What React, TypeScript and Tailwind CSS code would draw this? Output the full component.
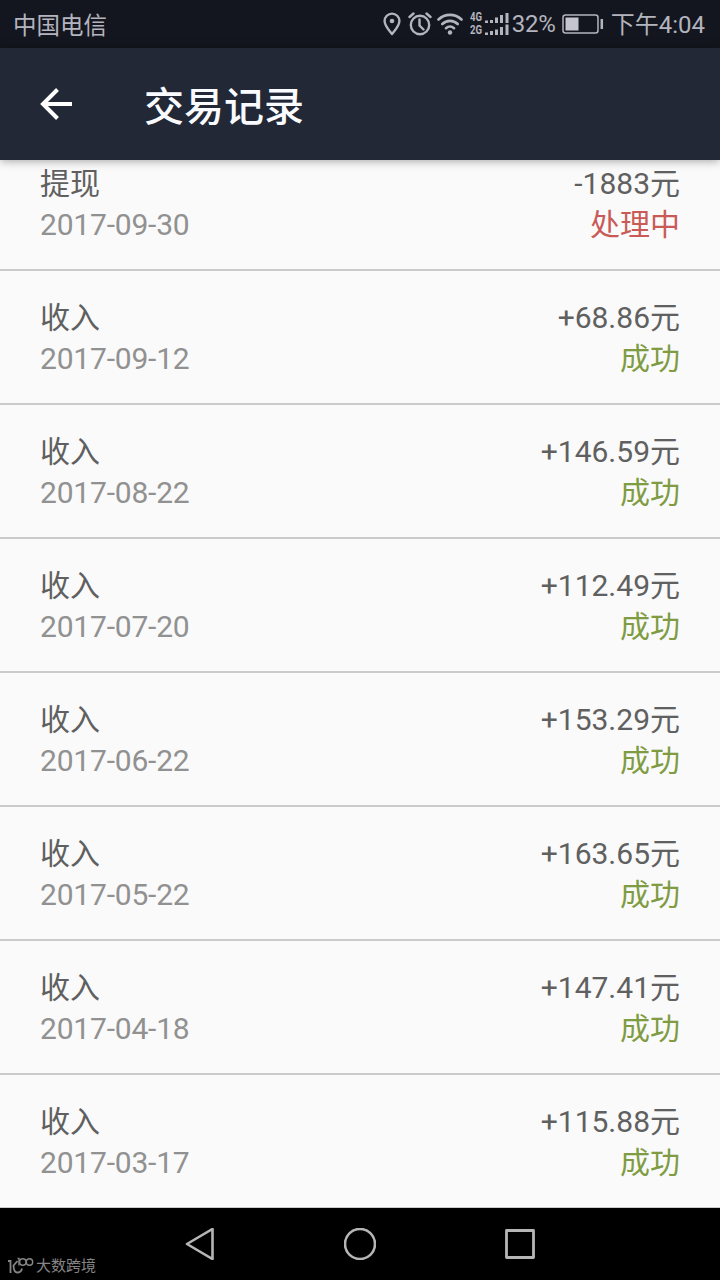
import React from 'react';

type Transaction = {
  title: string;
  date: string;
  amount: string;
  status: string;
  pending?: boolean;
};

const transactions: Transaction[] = [
  { title: '提现', date: '2017-09-30', amount: '-1883元', status: '处理中', pending: true },
  { title: '收入', date: '2017-09-12', amount: '+68.86元', status: '成功' },
  { title: '收入', date: '2017-08-22', amount: '+146.59元', status: '成功' },
  { title: '收入', date: '2017-07-20', amount: '+112.49元', status: '成功' },
  { title: '收入', date: '2017-06-22', amount: '+153.29元', status: '成功' },
  { title: '收入', date: '2017-05-22', amount: '+163.65元', status: '成功' },
  { title: '收入', date: '2017-04-18', amount: '+147.41元', status: '成功' },
  { title: '收入', date: '2017-03-17', amount: '+115.88元', status: '成功' }
];

const StatusBar = () => (
  <div className="h-12 shrink-0 bg-[#14161f] text-[#b3b4bd] flex items-center justify-between pl-[13px] pr-[15px] text-[24px] leading-[48px] whitespace-nowrap">
    <span className="pt-[4px] text-[23.5px] leading-[44px]">中国电信</span>
    <div className="flex items-center">
      {/* Location */}
      <svg className="w-[18px] h-[24px]" viewBox="0 0 18 24" fill="none" stroke="currentColor" strokeWidth="2.4">
        <path d="M9 22C6 18 1.6 14 1.6 9a7.4 7.4 0 0 1 14.8 0c0 5-4.4 9-7.4 13z" strokeLinejoin="round" />
        <circle cx="9" cy="9" r="2.3" fill="currentColor" stroke="none" />
      </svg>
      {/* Alarm */}
      <svg className="ml-[7px] w-[24px] h-[24px]" viewBox="0 0 24 24" fill="none" stroke="currentColor" strokeWidth="2.4">
        <circle cx="12" cy="13" r="9.2" />
        <path d="M11.5 7.5v6l4 4M1.5 5l4-3.5M22.5 5l-4-3.5" strokeLinecap="round" />
      </svg>
      {/* Wi-Fi */}
      <svg className="ml-[5px] w-[26px] h-[24px]" viewBox="0 0 26 24" fill="none" stroke="currentColor" strokeWidth="2.6" strokeLinecap="round">
        <path d="M1.5 7.5a16.5 16.5 0 0 1 23 0M5.3 12a11 11 0 0 1 15.4 0M9 16.2a6 6 0 0 1 8 0" />
        <circle cx="13" cy="20.5" r="2.2" fill="currentColor" stroke="none" />
      </svg>
      {/* Dual SIM signal */}
      <div className="ml-[7px] w-[14px] text-[12px] font-bold">
        <div className="h-[13px] leading-[13px] origin-left scale-x-[0.8]">4G</div>
        <div className="h-[13px] leading-[13px] origin-left scale-x-[0.8]">2G</div>
      </div>
      <svg className="w-[25px] h-[24px]" viewBox="0 0 25 24" fill="none" stroke="currentColor" strokeWidth="3">
        <path d="M2.5 11V8.500M7.500 11V8M12.500 11V5.500M17.500 11V3M23 11V1M2.500 23v-2.500M7.500 23v-4M12.500 23v-5.500M17.500 23v-8M23 23V12.500" />
      </svg>
      <span className="ml-[3px] w-[46px] tracking-[-0.2px]">32%</span>
      {/* Battery */}
      <svg className="ml-[4px] w-[42px] h-[20px]" viewBox="0 0 42 20" fill="none" stroke="currentColor">
        <rect x="1" y="1" width="35" height="18" rx="2.5" strokeWidth="1.5" />
        <rect x="3.5" y="3.5" width="13" height="13" fill="#c5c5d0" stroke="none" />
        <path d="M39.8 5v10" strokeWidth="2.5" />
      </svg>
      <span className="ml-[7px] pt-[3px] leading-[45px]">下午4:04</span>
    </div>
  </div>
);

const Header = () => (
  <header className="relative z-10 h-28 shrink-0 bg-[#222836] flex items-center pl-[40px] shadow-[0_1px_9px_rgba(0,0,0,0.35)]">
    <svg className="w-8 h-8" viewBox="0 0 32 32" fill="none" stroke="white" strokeWidth="4">
      <path d="M32 16H3M17.5 1.5L3 16l14.5 14.5" />
    </svg>
    <h1 className="ml-[72px] pt-[8px] text-[40px] leading-[56px] font-medium text-[#fafbff]">交易记录</h1>
  </header>
);

const TransactionRow = ({ item }: { item: Transaction }) => (
  <li className="h-[134px] shrink-0 border-b-2 border-[#cbcbcb] px-10 pt-[27px] flex justify-between text-[30px] leading-10">
    <div>
      <p className="text-[#606060]">{item.title}</p>
      <p className="pt-px text-[#919191] tracking-[-0.2px]">{item.date}</p>
    </div>
    <div className="text-right">
      <p className="text-[#606060]">{item.amount}</p>
      <p className={item.pending ? 'pt-px text-[#c95a58]' : 'pt-px text-[#7f9c42]'}>{item.status}</p>
    </div>
  </li>
);

const NavigationBar = () => (
  <nav className="relative h-[72px] shrink-0 bg-black text-[#b5b5b5] flex items-center justify-center gap-32">
    <svg className="w-8 h-8" viewBox="0 0 32 32" fill="none" stroke="currentColor" strokeWidth="2.6" strokeLinejoin="round">
      <path d="M28.5 1v30L3 16z" />
    </svg>
    <svg className="w-8 h-8" viewBox="0 0 32 32" fill="none" stroke="currentColor" strokeWidth="2.6">
      <circle cx="16" cy="16" r="15" />
    </svg>
    <svg className="w-8 h-8" viewBox="0 0 32 32" fill="none" stroke="currentColor" strokeWidth="2.8" strokeLinejoin="round">
      <rect x="2.5" y="2.5" width="27" height="27" />
    </svg>
    {/* Watermark */}
    <div className="absolute left-[8px] bottom-[4px] flex items-center text-[#858585] text-[15px] leading-[20px]">
      <svg className="w-[26px] h-[18px]" viewBox="0 0 26 18" fill="none" stroke="currentColor">
        <path d="M0 4h2.5v12M9.5 4L5.5 8.5C5.5 13 7 15.5 9.5 15.5c2.500 0 4-1.500 4.500-4" strokeWidth="1.8" />
        <path d="M9.5 1.5H11v7" strokeWidth="1.4" />
        <circle cx="14.8" cy="5" r="3.2" strokeWidth="1.4" />
        <circle cx="21.5" cy="5" r="3.2" strokeWidth="1.4" />
      </svg>
      <span className="ml-[2px]">大数跨境</span>
    </div>
  </nav>
);

const App = () => {
  return (
    <div className="w-[720px] h-[1280px] flex flex-col overflow-hidden bg-[#fafafa] font-['Roboto','Noto_Sans_CJK_SC',sans-serif]">
      <StatusBar />
      <Header />
      <main className="h-[1048px] shrink-0 overflow-hidden">
        <ul className="-mt-[23px] flex flex-col">
          {transactions.map((item) => (
            <TransactionRow key={item.date} item={item} />
          ))}
        </ul>
      </main>
      <NavigationBar />
    </div>
  );
};

export default App;
